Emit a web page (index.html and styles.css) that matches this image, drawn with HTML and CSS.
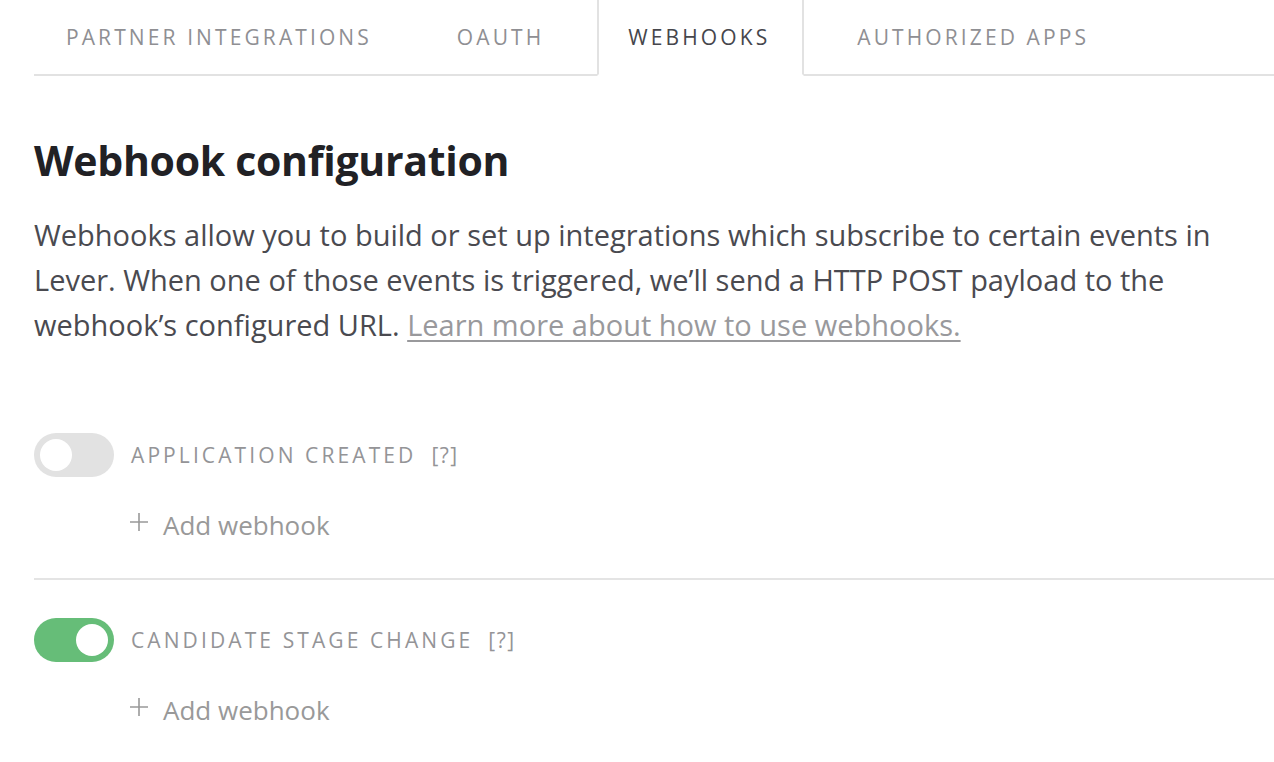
FILE: index.html
```html
<!DOCTYPE html>
<html>
<head>
<meta charset="utf-8">
<link rel="stylesheet" href="styles.css">
</head>
<body>
<div class="page">
  <nav class="tabs">
    <div class="tab">Partner Integrations</div>
    <div class="tab">OAuth</div>
    <div class="tab active">Webhooks</div>
    <div class="tab">Authorized Apps</div>
  </nav>
  <h1 class="title">Webhook configuration</h1>
  <p class="intro">Webhooks allow you to build or set up integrations which subscribe to certain events in Lever. When one of those events is triggered, we’ll send a HTTP POST payload to the webhook’s configured URL. <a class="learn" href="#">Learn more about how to use webhooks.</a></p>
  <div class="events">
    <section class="event">
      <div class="event-head">
        <span class="toggle"><span class="knob"></span></span>
        <span class="event-name">Application created</span>
        <span class="help">[?]</span>
      </div>
      <div class="add">
        <svg class="plus" width="20" height="20" viewBox="0 0 20 20"><path d="M10 1V19M1 10H19" stroke="#999" stroke-width="1.6" fill="none"/></svg>
        <span>Add webhook</span>
      </div>
    </section>
    <section class="event">
      <div class="event-head">
        <span class="toggle on"><span class="knob"></span></span>
        <span class="event-name">Candidate stage change</span>
        <span class="help">[?]</span>
      </div>
      <div class="add">
        <svg class="plus" width="20" height="20" viewBox="0 0 20 20"><path d="M10 1V19M1 10H19" stroke="#999" stroke-width="1.6" fill="none"/></svg>
        <span>Add webhook</span>
      </div>
    </section>
  </div>
</div>
</body>
</html>
```
FILE: styles.css
```css
html, body {
  margin: 0;
  padding: 0;
  background: #fff;
  overflow: hidden;
}
body {
  font-family: "Open Sans", "Noto Sans", sans-serif;
  color: #4a4a50;
}
.page {
  padding-left: 34px;
}
.tabs {
  display: flex;
  height: 76px;
  box-sizing: border-box;
  border-bottom: 2px solid #e2e2e2;
  gap: 21px;
}
.tab {
  display: flex;
  align-items: center;
  padding: 0 32px;
  text-transform: uppercase;
  font-size: 21px;
  letter-spacing: 3.1px;
  color: #8f8f93;
  white-space: nowrap;
}
.tab.active {
  color: #46464c;
  border: 2px solid #e2e2e2;
  border-top: none;
  border-bottom-color: #fff;
  margin-bottom: -2px;
  padding: 0 32px 0 29px;
}
.title {
  margin: 56px 0 0;
  font-size: 41px;
  line-height: 56px;
  font-weight: 700;
  color: #212125;
  letter-spacing: -0.3px;
}
.intro {
  margin: 24px 0 0;
  font-size: 29px;
  line-height: 45px;
  color: #4a4a50;
  width: 1220px;
}
.learn {
  color: #99999c;
  text-decoration: underline;
  text-decoration-thickness: 2px;
  text-underline-offset: 4px;
}
.events {
  margin-top: 46px;
}
.event {
  padding: 38px 0 33px;
  border-bottom: 2px solid #e4e4e4;
}
.event:first-child {
  padding-top: 40px;
}
.event-head {
  display: flex;
  align-items: center;
  height: 44px;
}
.toggle {
  width: 80px;
  height: 44px;
  border-radius: 22px;
  background: #e2e2e2;
  display: flex;
  align-items: center;
  padding: 0 6px;
  box-sizing: border-box;
}
.toggle.on {
  background: #66bd78;
  justify-content: flex-end;
}
.knob {
  width: 32px;
  height: 32px;
  border-radius: 50%;
  background: #fff;
}
.event-name {
  margin-left: 17px;
  text-transform: uppercase;
  font-size: 21px;
  letter-spacing: 3.1px;
  color: #949497;
}
.help {
  margin-left: 15px;
  font-size: 21px;
  color: #949497;
  letter-spacing: 1.5px;
}
.add {
  display: flex;
  align-items: center;
  margin-top: 28px;
  margin-left: 95px;
  height: 40px;
  font-size: 26px;
  color: #999;
}
.plus {
  margin-right: 14px;
  margin-top: -6px;
}
```
